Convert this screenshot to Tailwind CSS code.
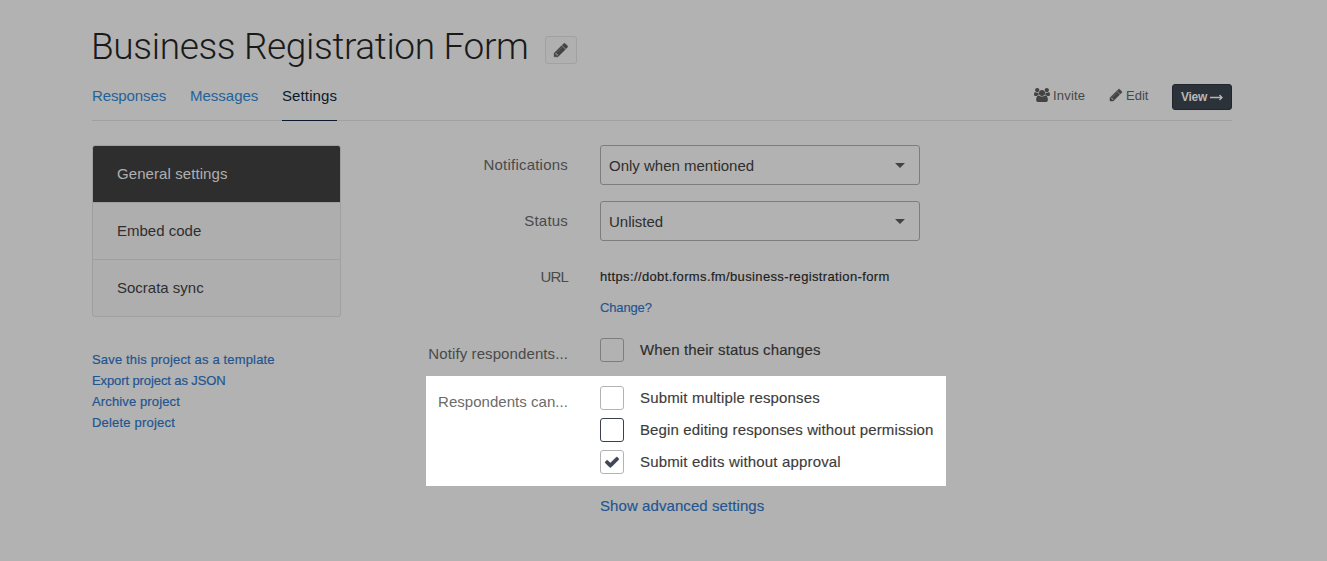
<!DOCTYPE html>
<html lang="en">
<head>
<meta charset="utf-8">
<title>Business Registration Form</title>
<script src="https://cdn.jsdelivr.net/npm/@tailwindcss/browser@4"></script>
</head>
<body class="h-[561px] overflow-hidden bg-[#b2b2b2] font-['Liberation_Sans',Arial,sans-serif] text-[15px] leading-5 text-[#2e2e2e]">
<div class="ml-[92px] w-[1140px]">
  <header>
    <div class="flex h-[72px] items-end">
      <h1 class="-ml-px w-[454px] whitespace-nowrap font-['Roboto',sans-serif] text-[37px] font-light leading-[50px] tracking-[-0.35px] text-[#1a1a1a]">Business Registration Form</h1>
      <button class="mb-2 flex h-7 w-8 items-center justify-center rounded-[3px] border border-[#a1a1a1] bg-[#b0b0b0]" aria-label="Rename">
        <svg class="size-4" viewBox="0 0 1792 1792" fill="#434343" stroke="#434343" stroke-width="50"><path d="M491 1536l91-91-235-235-91 91v107h128v128h107zm523-928q0-22-22-22-10 0-17 7l-542 542q-7 7-7 17 0 22 22 22 10 0 17-7l542-542q7-7 7-17zm-54-192l416 416-832 832h-416v-416zm683 96q0 53-37 90l-166 166-416-416 166-165q36-38 90-38 53 0 91 38l235 234q37 39 37 91z"/></svg>
      </button>
    </div>
    <div class="flex h-[49px] items-stretch justify-between border-b border-[#a0a0a0]">
      <nav class="flex gap-6 text-[#1f639a]">
        <a class="h-[49px] w-[74px] whitespace-nowrap pt-[14px] tracking-[-0.1px]">Responses</a>
        <a class="h-[49px] w-[68px] whitespace-nowrap pt-[14px]">Messages</a>
        <a class="h-[49px] w-[55px] whitespace-nowrap border-b border-[#0a1a2c] pt-[14px] tracking-[0.12px] text-[#0a1a2c]">Settings</a>
      </nav>
      <div class="flex text-[13px] text-[#474747]">
        <a class="flex w-[75px] gap-[3px] whitespace-nowrap pt-[14px] tracking-[0.2px]"><svg class="mt-[2px] h-[14px] w-4" viewBox="0 0 1920 1792" fill="#434343" preserveAspectRatio="none"><path d="M593 896q-162 5-265 128h-134q-82 0-138-40.500t-56-118.500q0-353 124-353 6 0 43.500 21t97.500 42.500 119 21.500q67 0 133-23-5 37-5 66 0 139 81 256zm1071 637q0 120-73 189.500t-194 69.500h-874q-121 0-194-69.500t-73-189.500q0-53 3.500-103.500t14-109 26.500-108.500 43-97.500 62-81 85.500-53.500 111.500-20q10 0 43 21.500t73 48 107 48 135 21.500 135-21.500 107-48 73-48 43-21.500q61 0 111.500 20t85.500 53.500 62 81 43 97.500 26.500 108.500 14 109 3.500 103.500zm-1024-1277q0 106-75 181t-181 75-181-75-75-181 75-181 181-75 181 75 75 181zm704 384q0 159-112.500 271.500t-271.500 112.500-271.500-112.500-112.500-271.500 112.500-271.500 271.500-112.500 271.500 112.500 112.500 271.500zm576 225q0 78-56 118.500t-138 40.500h-134q-103-123-265-128 81-117 81-256 0-29-5-66 66 23 133 23 59 0 119-21.500t97.500-42.500 43.500-21q124 0 124 353zm-128-609q0 106-75 181t-181 75-181-75-75-181 75-181 181-75 181 75 75 181z"/></svg>Invite</a>
        <a class="flex w-[63px] gap-[3px] whitespace-nowrap pt-[14px]"><svg class="mt-[2px] size-[14px]" viewBox="0 0 1792 1792" fill="#434343" stroke="#434343" stroke-width="60"><path d="M491 1536l91-91-235-235-91 91v107h128v128h107zm523-928q0-22-22-22-10 0-17 7l-542 542q-7 7-7 17 0 22 22 22 10 0 17-7l542-542q7-7 7-17zm-54-192l416 416-832 832h-416v-416zm683 96q0 53-37 90l-166 166-416-416 166-165q36-38 90-38 53 0 91 38l235 234q37 39 37 91z"/></svg>Edit</a>
        <button class="mt-3 flex h-[26px] w-[60px] items-center gap-[3px] rounded-[3px] border border-[#20262c] bg-[#2c3239] pl-2 text-[12px] font-bold tracking-[-0.25px] text-[#b8b8b8]">View<svg class="mt-px h-[7px] w-[13px]" viewBox="0 0 13 7" fill="none" stroke="#b8b8b8" stroke-width="1.3"><path d="M0 3.500h12M9.500 1l2.500 2.500-2.500 2.500"/></svg></button>
      </div>
    </div>
  </header>
  <div class="flex">
    <aside class="w-[249px] pt-6">
      <ul class="h-[172px] overflow-hidden rounded-[3px] border border-[#9f9f9f] bg-[#aeaeae]">
        <li class="flex h-14 items-center bg-[#2e2e2e] pl-6 tracking-[0.08px] text-[#b0b0b0]">General settings</li>
        <li class="flex h-[57px] items-center border-t border-[#9f9f9f] pl-6">Embed code</li>
        <li class="flex h-[57px] items-center border-t border-[#9f9f9f] pl-6">Socrata sync</li>
      </ul>
      <ul class="mt-8 whitespace-nowrap text-[13px] leading-[21px] text-[#1f5591] [-webkit-text-stroke:0.2px]">
        <li class="tracking-[0.16px]">Save this project as a template</li>
        <li class="tracking-[-0.1px]">Export project as JSON</li>
        <li class="tracking-[0.13px]">Archive project</li>
        <li class="tracking-[0.2px]">Delete project</li>
      </ul>
    </aside>
    <main class="ml-[85px] w-[520px] whitespace-nowrap pt-6">
      <div class="flex h-14 gap-8"><div class="w-[142px] pt-[10px] text-right tracking-[0.22px] text-[#4a4a4a]">Notifications</div>
        <div class="flex h-10 w-[320px] items-center justify-between rounded-[3px] border border-[#7d7d7d] pl-2 pr-[14px]"><span class="pt-0.5">Only when mentioned</span><i class="h-0 w-0 border-x-5 border-t-5 border-x-transparent border-t-[#434343]"></i></div></div>
      <div class="flex h-14 gap-8"><div class="w-[142px] pt-[10px] text-right tracking-[0.2px] text-[#4a4a4a]">Status</div>
        <div class="flex h-10 w-[320px] items-center justify-between rounded-[3px] border border-[#7d7d7d] pl-2 pr-[14px]"><span class="pt-0.5">Unlisted</span><i class="h-0 w-0 border-x-5 border-t-5 border-x-transparent border-t-[#434343]"></i></div></div>
      <div class="flex h-20 gap-8"><div class="w-[142px] pt-[10px] text-right tracking-[-0.8px] text-[#4a4a4a]">URL</div>
        <div class="pt-[10px] text-[13px] [-webkit-text-stroke:0.15px]"><p class="tracking-[0.36px] text-[#1c1c1c]">https://dobt.forms.fm/business-registration-form</p><p class="mt-[11px] tracking-[-0.15px] text-[#1f5591]">Change?</p></div></div>
      <div class="flex h-[39px] gap-8"><div class="w-[142px] pt-[7px] text-right tracking-[0.1px] text-[#4a4a4a]">Notify respondents...</div>
        <label class="flex h-6 items-center gap-4 pt-px tracking-[0.12px] [-webkit-text-stroke:0.15px]"><i class="size-6 rounded-[3px] border border-[#7d7d7d]"></i>When their status changes</label></div>
      <section class="flex h-[110px] gap-8 bg-white pt-[10px] text-[#3c3c3c]"><div class="w-[142px] pt-[6px] text-right tracking-[0.04px] text-[#6b6b6b]">Respondents can...</div>
        <div class="flex flex-col gap-2 [-webkit-text-stroke:0.15px]">
          <label class="flex h-6 items-center gap-4 tracking-[0.16px]"><i class="size-6 rounded-[3px] border border-[#b3b3b3]"></i>Submit multiple responses</label>
          <label class="flex h-6 items-center gap-4 tracking-[0.12px]"><i class="size-6 rounded-[3px] border border-[#3b424f]"></i>Begin editing responses without permission</label>
          <label class="flex h-6 items-center gap-4 tracking-[0.17px]"><i class="flex size-6 items-center justify-center rounded-[3px] border border-[#b3b3b3]"><svg class="size-4" viewBox="0 0 1792 1792" fill="#3f4754" stroke="#3f4754" stroke-width="40"><path d="M1671 566q0 40-28 68l-724 724-136 136q-28 28-68 28t-68-28l-136-136-362-362q-28-28-28-68t28-68l136-136q28-28 68-28t68 28l294 295 656-657q28-28 68-28t68 28l136 136q28 28 28 68z"/></svg></i>Submit edits without approval</label>
        </div></section>
      <a class="ml-[174px] mt-[10px] block tracking-[0.08px] text-[#1f5591] [-webkit-text-stroke:0.15px]">Show advanced settings</a>
    </main>
  </div>
</div>
</body>
</html>
